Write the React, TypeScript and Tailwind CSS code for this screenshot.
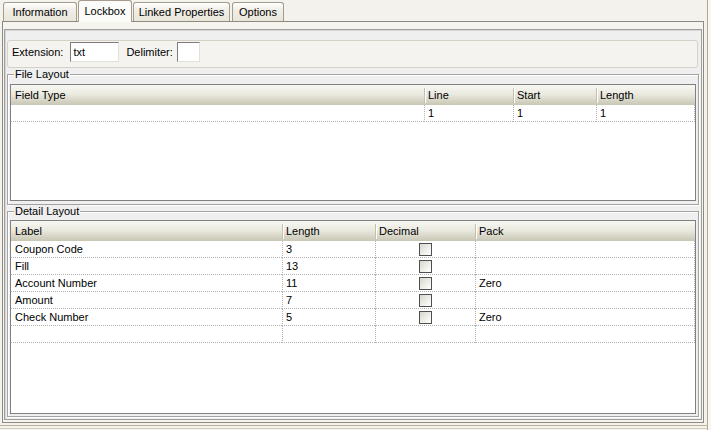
import React from "react";

const fileCols = [
  { label: "Field Type", w: 413 },
  { label: "Line", w: 89 },
  { label: "Start", w: 83 },
  { label: "Length", w: 99 },
];

const detailCols = [
  { label: "Label", w: 271 },
  { label: "Length", w: 93 },
  { label: "Decimal", w: 100 },
  { label: "Pack", w: 220 },
];

const detailRows = [
  { label: "Coupon Code", length: "3", pack: "" },
  { label: "Fill", length: "13", pack: "" },
  { label: "Account Number", length: "11", pack: "Zero" },
  { label: "Amount", length: "7", pack: "" },
  { label: "Check Number", length: "5", pack: "Zero" },
];

function Tab({ label, width, selected, ml }: { label: string; width: number; selected?: boolean; ml: string }) {
  if (selected) {
    return (
      <div
        className={`${ml} relative z-10 -mb-px h-[22px] flex items-center justify-center rounded-t-[3px] border border-b-0 border-[#a49c8c] bg-[#fbfbf9]`}
        style={{ width }}
      >
        <span className="-mt-[1px]">{label}</span>
      </div>
    );
  }
  return (
    <div
      className={`${ml} h-[19px] flex items-center justify-center rounded-t-[3px] border border-b-0 border-[#a49c8c] bg-[linear-gradient(to_bottom,#ffffff,#f1efe8_35%,#e8e5da)]`}
      style={{ width }}
    >
      <span className="mt-[1px]">{label}</span>
    </div>
  );
}

function HeaderCell({ label, w, first }: { label: string; w: number; first?: boolean }) {
  return (
    <div className="relative h-[20px] flex items-center pl-[4px] shrink-0" style={{ width: w }}>
      {!first && (
        <span className="absolute left-0 top-[3px] bottom-[2px] w-px bg-[#c2c0b0] shadow-[1px_0_0_#ffffff]" />
      )}
      {label}
    </div>
  );
}

function Header({ cols }: { cols: { label: string; w: number }[] }) {
  return (
    <div className="flex bg-[linear-gradient(to_bottom,#f8f7f2,#ebeae0_45%,#c8c6b3)]">
      {cols.map((c, i) => (
        <HeaderCell key={i} label={c.label} w={c.w} first={i === 0} />
      ))}
    </div>
  );
}

function Cell({ w, first, last, children, center }: { w: number; first?: boolean; last?: boolean; children?: React.ReactNode; center?: boolean }) {
  return (
    <div
      className={`h-[17px] shrink-0 flex items-center border-b border-dotted border-[#b2b2b2] ${first ? "" : "border-l"} ${last ? "border-r" : ""} ${center ? "justify-center" : "pl-[3px]"} ${first ? "pl-[4px]" : ""}`}
      style={{ width: w }}
    >
      {children}
    </div>
  );
}

function Checkbox() {
  return (
    <div className="w-[13px] h-[13px] border border-[#4f4f4f] bg-[linear-gradient(135deg,#d8d8d2,#f4f4f0_70%,#ffffff)]" />
  );
}

function Fieldset({ title, children, className }: { title: string; children: React.ReactNode; className?: string }) {
  return (
    <div className={`relative border border-[#a3a3a3] shadow-[inset_1px_1px_0_#ffffff,1px_1px_0_#ffffff] px-[2px] ${className ?? ""}`}>
      <span className="absolute left-[6px] -top-[7px] bg-[#efefef] px-[1px] leading-[13px]">{title}</span>
      {children}
    </div>
  );
}

export default function App() {
  return (
    <div className="w-[711px] h-[430px] overflow-hidden bg-[#f4f2ec] text-[11px] text-black font-['Liberation_Sans',Arial,sans-serif] flex">
      <div className="w-[707px] flex flex-col">
        {/* Tabs */}
        <div className="flex items-end h-[21px] pl-[3px]">
          <Tab label="Information" width={74} ml="ml-0" />
          <Tab label="Lockbox" width={54} ml="ml-[1px]" selected />
          <Tab label="Linked Properties" width={97} ml="ml-[1px]" />
          <Tab label="Options" width={52} ml="ml-[2px]" />
        </div>

        {/* Tab panel */}
        <div className="ml-[2px] w-[702px] h-[402px] border border-[#8f8a80] bg-[#f6f4ef] px-[1px] pt-[7px] pb-[2px]">
          <div className="h-full border border-[#9e9e9e] shadow-[inset_1px_1px_0_#d6d6d6] bg-[#efefef] px-[2px] pt-[10px]">
            {/* Extension / Delimiter */}
            <div className="h-[28px] mr-[1px] rounded-[3px] border border-[#d5d1c6] bg-[#f5f3ef] flex items-start pl-[4px] pt-[1px]">
              <div className="h-[20px] flex items-center">
                <span>Extension:</span>
                <div className="ml-[7px] w-[49px] h-[20px] bg-white border border-[#e2e0da] border-t-[#7c7c7c] border-l-[#7c7c7c] pl-[2px] flex items-center">
                  txt
                </div>
                <span className="ml-[7px]">Delimiter:</span>
                <div className="ml-[4px] w-[23px] h-[20px] bg-white border border-[#e2e0da] border-t-[#7c7c7c] border-l-[#7c7c7c]" />
              </div>
            </div>

            {/* File Layout */}
            <Fieldset title="File Layout" className="mt-[6px] h-[131px] pt-[9px]">
              <div className="h-[117px] border border-[#808080] bg-white">
                <Header cols={fileCols} />
                <div className="flex">
                  {fileCols.map((c, i) => (
                    <Cell key={i} w={c.w} first={i === 0} last={i === fileCols.length - 1}>
                      {i === 0 ? "" : "1"}
                    </Cell>
                  ))}
                </div>
              </div>
            </Fieldset>

            {/* Detail Layout */}
            <Fieldset title="Detail Layout" className="mt-[6px] h-[206px] pt-[8px]">
              <div className="h-[194px] border border-[#808080] bg-white">
                <Header cols={detailCols} />
                {detailRows.map((r, ri) => (
                  <div key={ri} className="flex">
                    <Cell w={detailCols[0].w} first>{r.label}</Cell>
                    <Cell w={detailCols[1].w}>{r.length}</Cell>
                    <Cell w={detailCols[2].w} center>
                      <Checkbox />
                    </Cell>
                    <Cell w={detailCols[3].w} last>{r.pack}</Cell>
                  </div>
                ))}
                <div className="flex">
                  <Cell w={detailCols[0].w} first />
                  <Cell w={detailCols[1].w} />
                  <Cell w={detailCols[2].w} />
                  <Cell w={detailCols[3].w} last />
                </div>
              </div>
            </Fieldset>
          </div>
        </div>

        {/* Window bottom edge */}
        <div className="mt-[2px] h-px bg-[#b9b0a0]" />
        <div className="mt-[2px] h-px bg-[#d6cfc0]" />
      </div>
      <div className="w-px bg-[#b0a795]" />
      <div className="flex-1 bg-[#f8f6f1]" />
    </div>
  );
}
